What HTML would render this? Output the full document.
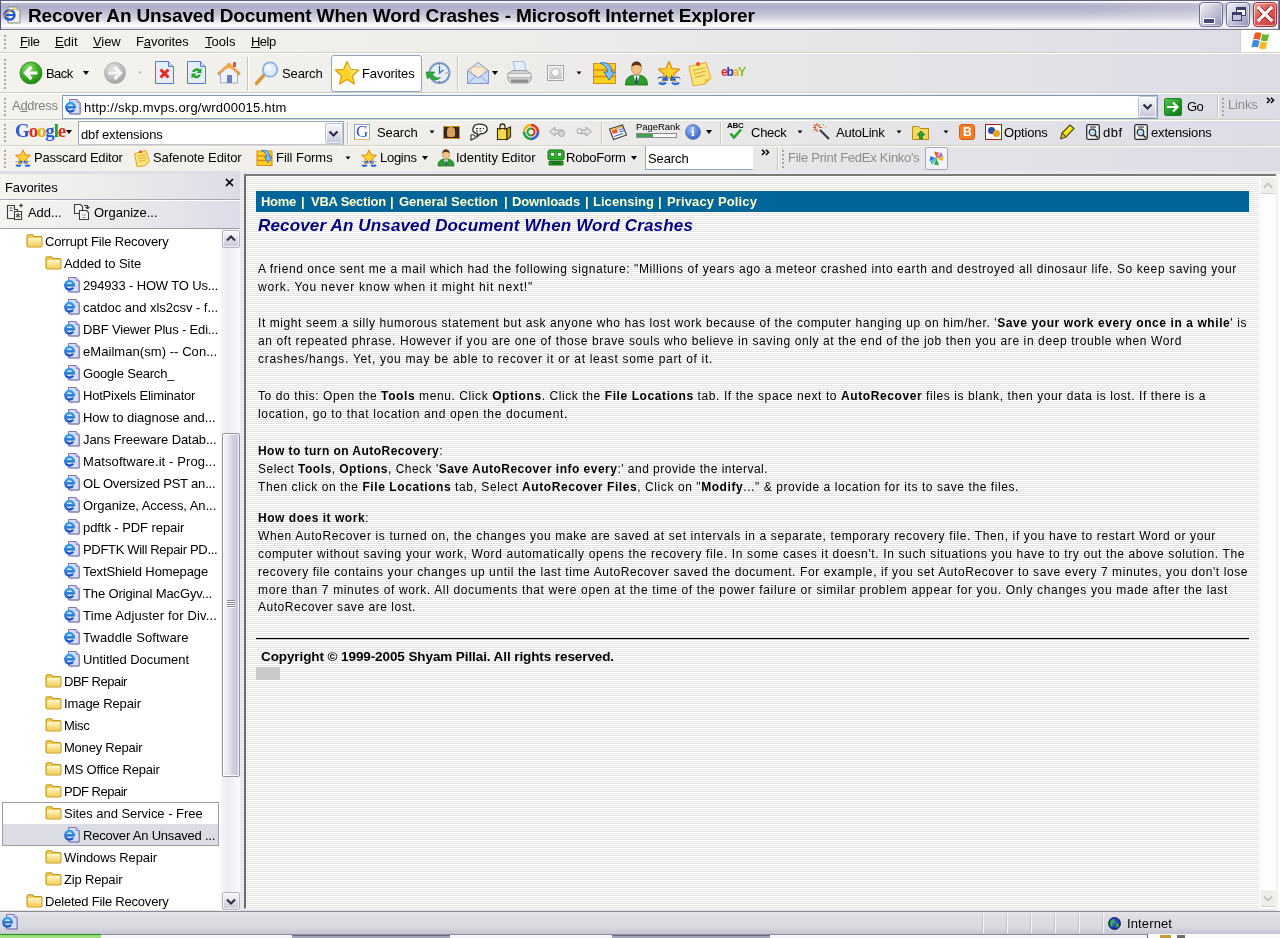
<!DOCTYPE html>
<html>
<head>
<meta charset="utf-8">
<title>Recover An Unsaved Document When Word Crashes</title>
<style>
*{box-sizing:border-box;margin:0;padding:0}
html,body{width:1280px;height:938px;overflow:hidden;will-change:transform;background:#e4e3e8;font-family:"Liberation Sans",sans-serif;font-size:13px;color:#000}
.a{position:absolute;white-space:nowrap}
#titlebar{left:0;top:0;width:1280px;height:30px;background:linear-gradient(#62627e 0,#62627e 1px,#f2f2f8 1px,#f2f2f8 2.500px,#b8b8cc 3.500px,#aeaecb 7px,#c2c2d4 14px,#dedee8 20px,#fbfbfc 25px,#fbfbfc 26.500px,#e6e6ec 27.500px,#e6e6ec 28.500px,#7a7a96 29px,#7a7a96 30px)}
#titletext{left:28px;top:4px;font-weight:bold;font-size:19px;line-height:24px;color:#000;letter-spacing:-0.15px}
#menubar{left:0;top:30px;width:1280px;height:23px;background:linear-gradient(to right,#f3f2ed 0,#efeeea 35%,#dcdce6 100%);border-bottom:1px solid #d2d0c6}
.grip{width:2px;background-image:linear-gradient(#aaa89c 0,#aaa89c 2px,transparent 2px);background-size:2px 4px}
.menu{top:34px;font-size:13px;line-height:16px}
.menu u{text-decoration:underline}
#toolbar{left:0;top:53px;width:1280px;height:40px;background:linear-gradient(to right,#f3f2ed 0,#efeeea 35%,#dcdce6 100%);border-top:1px solid #fff;border-bottom:1px solid #cfcdc2}
#addrbar{left:0;top:93px;width:1280px;height:26px;background:linear-gradient(to right,#f3f2ed 0,#efeeea 35%,#dcdce6 100%);border-top:1px solid #fff}
#googlebar{left:0;top:119px;width:1280px;height:26px;background:linear-gradient(to right,#f3f2ed 0,#efeeea 35%,#dcdce6 100%);border-top:1px solid #d4d2c6;box-shadow:inset 0 1px 0 #fbfbf8}
#robobar{left:0;top:145px;width:1280px;height:27px;background:linear-gradient(to right,#f3f2ed 0,#efeeea 35%,#dcdce6 100%);border-top:1px solid #d4d2c6;box-shadow:inset 0 1px 0 #fbfbf8}
#favpane{left:0;top:172px;width:240px;height:738px;background:#fff}
#favhead{left:0;top:171px;width:240px;height:29px;background:linear-gradient(#dedee6 0,#dedee6 3px,rgba(255,255,255,0) 3px),linear-gradient(to right,#f4f4f0 0,#ececec 45%,#dcdce8 100%);border-bottom:1px solid #a8a8b0}
#favtools{left:0;top:200px;width:240px;height:29px;background:linear-gradient(to right,#f4f4f0 0,#ececec 45%,#dcdce8 100%);border-top:1px solid #fbfbfb;border-bottom:1px solid #9c9ca4}
#splitter{left:240px;top:171px;width:1040px;height:739px;background:#e8e8ee}
#content{left:244px;top:174px;width:1032px;height:735px;border-bottom:1px solid #fbfbf6;border-left:2px solid #6e6e6a;border-top:2px solid #6e6e6a;border-top-color:#7a7a76;background:repeating-linear-gradient(#ffffff 0,#ffffff 1px,#e4e4e2 1px,#e4e4e2 2px)}
#statusbar{left:0;top:911px;width:1280px;height:23px;border-top:1px solid #8c8c94;background:linear-gradient(#e6e6ec 0,#dedee4 4px,#d8d8e0 15px,#c6c6d0 22px)}
#taskbar{left:0;top:934px;width:1280px;height:4px;background:#f3f3f7}
.tb{top:2px;width:24px;height:25px;border-radius:4px;border:1px solid #6c6c94;background:linear-gradient(135deg,#f4f4fa 0,#d4d4e2 35%,#a8a8c6 80%,#8c8cb0 100%);box-shadow:inset 0 0 0 1px rgba(255,255,255,.55)}
.tb i{position:absolute;display:block;border:1px solid #3c3c66;background:#fff}
.tc{background:linear-gradient(135deg,#f4a49c 0,#e06058 40%,#c83c3c 100%);border-color:#a03434}
.tc svg{position:absolute;left:-1px;top:-1px}
.dn{width:0;height:0;border-left:3.5px solid transparent;border-right:3.5px solid transparent;border-top:4px solid #000}
.vsep{width:2px;border-left:1px solid #c8c6ba;border-right:1px solid #fff}
.cbtn{border:1px solid #b8c4dc;border-radius:2px;background:linear-gradient(#f8f8fc,#dcdce8 60%,#c4c4d8);box-shadow:inset 0 0 0 1px rgba(255,255,255,.7)}
.ft{line-height:16px;font-size:13px}
.sbtn{width:18px;height:18px;border:1px solid #b4b4c4;border-radius:2px;background:linear-gradient(#fbfbfd,#e0e0ea 50%,#c8c8d8);box-shadow:inset 0 0 0 1px rgba(255,255,255,.7)}
.pl{font-size:12px;line-height:18px;color:#000}
</style>
</head>
<body>
<div class="a" id="titlebar"></div>
<div class="a" style="left:0;top:0;width:1px;height:30px;background:#54547a"></div><div class="a" style="left:1278px;top:0;width:2px;height:30px;background:linear-gradient(to right,#8c8cac,#4c4c70)"></div><div class="a" style="left:1080px;top:1px;width:198px;height:27px;background:linear-gradient(to right,rgba(255,255,255,0),rgba(255,255,255,.3))"></div><div class="a" id="titletext">Recover An Unsaved Document When Word Crashes - Microsoft Internet Explorer</div>
<div class="a" id="menubar"></div>
<div class="a" id="toolbar"></div>
<div class="a" id="addrbar"></div>
<div class="a" id="googlebar"></div>
<div class="a" id="robobar"></div>
<div class="a" id="favpane"></div>
<div class="a" id="favhead"></div>
<div class="a" id="favtools"></div>
<div class="a" id="splitter"></div>
<div class="a" id="content"></div>
<div class="a" id="statusbar"></div>
<div class="a" id="taskbar"></div>
<!--MENU-->
<svg class="a" style="left:3px;top:6px" width="20" height="18" viewBox="0 0 20 18">
<path d="M5 1h9l3 3v13H5z" fill="#f4f2e6" stroke="#8a8a80" stroke-width="1"/>
<path d="M14 1v3h3" fill="#d8d6c8" stroke="#8a8a80" stroke-width="0.8"/>
<ellipse cx="6.5" cy="9" rx="5" ry="4.6" fill="none" stroke="#1c58d8" stroke-width="2.4"/>
<path d="M2 9h9" stroke="#1c58d8" stroke-width="2"/>
<path d="M0.5 11.5C3 5 9 2.5 12.5 3.5" fill="none" stroke="#e8a020" stroke-width="1.2"/>
</svg>
<div class="a tb" style="left:1199px"><i style="left:4px;top:16px;width:10px;height:4px;background:#4a4a78;border:0;outline:1px solid #fff"></i></div>
<div class="a tb" style="left:1226px"><i style="left:9px;top:4px;width:10px;height:9px;border-top-width:3px"></i><i style="left:5px;top:9px;width:10px;height:9px;border-top-width:3px;background:#c4c4da"></i></div>
<div class="a tb tc" style="left:1253px"><svg width="24" height="24" viewBox="0 0 24 24"><path d="M6 6l12 12M18 6L6 18" stroke="#7a1c1c" stroke-width="4.6"/><path d="M6 6l12 12M18 6L6 18" stroke="#fff" stroke-width="3.2" stroke-linecap="square"/></svg></div>
<div class="a grip" style="left:4px;top:35px;height:16px"></div>
<div class="a menu" style="left:20px;letter-spacing:-0.342px"><u>F</u>ile</div>
<div class="a menu" style="left:55px;letter-spacing:0.048px"><u>E</u>dit</div>
<div class="a menu" style="left:93px;letter-spacing:-0.088px"><u>V</u>iew</div>
<div class="a menu" style="left:136px;letter-spacing:-0.098px">F<u>a</u>vorites</div>
<div class="a menu" style="left:205px;letter-spacing:0.048px"><u>T</u>ools</div>
<div class="a menu" style="left:251px;letter-spacing:-0.537px"><u>H</u>elp</div>
<div class="a" style="left:1240px;top:30px;width:40px;height:22px;background:#fff;border-left:1px solid #d6d4c8"></div>
<svg class="a" style="left:1251px;top:31px" width="22" height="20" viewBox="0 0 20 18">
<path d="M3.5 1.5C5.5 0.5 7.5 1 9.5 2L8 8C6 7 4 6.8 2 7.6z" fill="#ee5a24"/>
<path d="M10.5 2.4C12.5 3.4 14.5 3.6 16.5 2.6L15 8.8C13 9.6 11 9.2 9 8.4z" fill="#6ab52c"/>
<path d="M1.8 8.6C3.8 7.8 5.8 8 7.8 9L6.3 15C4.3 14 2.3 14 0.3 14.8z" fill="#3a8ae0"/>
<path d="M8.8 9.4C10.8 10.2 12.8 10.6 14.8 9.8L13.3 16C11.3 16.8 9.3 16.4 7.3 15.4z" fill="#f4b81c"/>
</svg>
<!--TOOLBAR-->
<div class="a grip" style="left:4px;top:59px;height:32px"></div>
<svg class="a" style="left:19px;top:61px" width="24" height="24" viewBox="0 0 24 24">
<defs><radialGradient id="gb" cx="40%" cy="30%" r="75%"><stop offset="0" stop-color="#8fe070"/><stop offset="0.55" stop-color="#3cb024"/><stop offset="1" stop-color="#1c7c14"/></radialGradient>
<radialGradient id="gf" cx="40%" cy="30%" r="75%"><stop offset="0" stop-color="#e4e4e4"/><stop offset="0.6" stop-color="#bdbdbd"/><stop offset="1" stop-color="#9a9a9a"/></radialGradient></defs>
<circle cx="12" cy="12" r="11" fill="url(#gb)" stroke="#2a8a1c" stroke-width="0.8"/>
<path d="M18.500 12H7.500M12.500 6L6.500 12l6 6" fill="none" stroke="#fff" stroke-width="3.200"/></svg>
<div class="a" style="left:46px;top:66px;line-height:16px;letter-spacing:-0.577px">Back</div>
<div class="a dn" style="left:83px;top:71px"></div>
<svg class="a" style="left:103px;top:61px" width="24" height="24" viewBox="0 0 24 24"><circle cx="12" cy="12" r="10.5" fill="url(#gf)" stroke="#a8a8a8" stroke-width="0.8"/><path d="M5.500 12h11M11.500 6l6 6-6 6" fill="none" stroke="#f6f6f6" stroke-width="3.200"/></svg>
<div class="a dn" style="left:137px;top:71px;border-top-color:#c4c4c4;transform:scale(.7)"></div>
<svg class="a" style="left:154px;top:60px" width="22" height="26" viewBox="0 0 22 26"><path d="M1.5 1.5h13l5 5v17h-18z" fill="#e6eefc" stroke="#5a7ac8"/><path d="M14.5 1.5v5h5" fill="#c8d8f4" stroke="#5a7ac8"/><path d="M6.5 9.5l8 8M14.5 9.5l-8 8" stroke="#e8281c" stroke-width="3"/></svg>
<svg class="a" style="left:186px;top:60px" width="22" height="26" viewBox="0 0 22 26"><path d="M1.5 1.5h13l5 5v17h-18z" fill="#e6eefc" stroke="#5a7ac8"/><path d="M14.5 1.5v5h5" fill="#c8d8f4" stroke="#5a7ac8"/><path d="M6 12a5 5 0 0 1 8-2.5l1.5-1.5v5h-5l1.8-1.8A3 3 0 0 0 8.5 12z" fill="#24a428"/><path d="M15 14.500a5 5 0 0 1-8 2.500L5.500 18.500v-5h5L8.700 15.300A3 3 0 0 0 12.500 14.500z" fill="#24a428"/></svg>
<svg class="a" style="left:216px;top:60px" width="26" height="26" viewBox="0 0 26 26"><path d="M13 3L1.500 13.500l2.500 2L13 7l9 8.500 2.500-2z" fill="#f09c38" stroke="#d07818" stroke-width="0.6"/><path d="M4.500 13.500L13 6l8.500 7.500V23h-17z" fill="#eef2fa" stroke="#8ca0cc" stroke-width="0.8"/><path d="M13 3L2 13l11-5 11 5z" fill="#f4a848"/><rect x="11" y="15" width="5" height="8" fill="#6a82c4"/><rect x="17" y="2" width="3" height="5" fill="#d8584c"/></svg>
<div class="a vsep" style="left:247px;top:57px;height:34px"></div>
<svg class="a" style="left:254px;top:60px" width="26" height="26" viewBox="0 0 26 26"><path d="M2.500 23.500l8-9" stroke="#d89838" stroke-width="3.400" stroke-linecap="round"/><circle cx="16" cy="9.500" r="7.200" fill="#dcecfc" stroke="#8cb0e0" stroke-width="1.800"/><circle cx="14.500" cy="8" r="3" fill="#fff" opacity=".8"/></svg>
<div class="a" style="left:282px;top:66px;line-height:16px;letter-spacing:-0.101px">Search</div>
<div class="a" style="left:331px;top:55px;width:91px;height:37px;background:#fff;border:1px solid #98a6c4;border-radius:3px"></div>
<svg class="a" style="left:334px;top:60px" width="26" height="26" viewBox="0 0 26 26"><path d="M13 1.500l3.400 7.800 8.400.8-6.300 5.600 1.900 8.300L13 19.600 5.600 24l1.900-8.300L1.200 10.100l8.400-.8z" fill="#fcd428" stroke="#d89c10" stroke-width="1.200" stroke-linejoin="round"/><path d="M13 4.500l2.400 5.800 5.600.6-4.300 3.800" fill="none" stroke="#fff09c" stroke-width="1.200"/></svg>
<div class="a" style="left:362px;top:66px;line-height:16px;letter-spacing:-0.097px">Favorites</div>
<svg class="a" style="left:425px;top:60px" width="27" height="26" viewBox="0 0 27 26"><circle cx="14.500" cy="13" r="10" fill="#e4eefa" stroke="#7c98c4" stroke-width="2"/><path d="M14.500 6v7l4-3" fill="none" stroke="#3c68b4" stroke-width="1.300"/><path d="M1 12h9l-2.500 2.500c2 3 5 4 8 3-3 3.500-8.500 3-11-.5L2.500 19z" fill="#2ca83c" stroke="#148424" stroke-width="0.600"/><path d="M14.500 3v2M22.500 13h-2M14.500 23v-2" stroke="#c85c3c" stroke-width="1.200"/></svg>
<div class="a vsep" style="left:457px;top:57px;height:34px"></div>
<svg class="a" style="left:466px;top:61px" width="24" height="24" viewBox="0 0 24 24"><path d="M1.500 9.500L12 1.500l10.500 8v13h-21z" fill="#dce8fa" stroke="#8098d0"/><path d="M5 6h14v9l-7 4-7-4z" fill="#fbead0" stroke="#d8a868" stroke-width="0.700"/><path d="M1.500 9.500L12 17l10.500-7.500v13h-21z" fill="#c8dcf8" stroke="#8098d0"/><path d="M1.500 22.500L10 15M22.500 22.500L14 15" stroke="#8098d0" stroke-width="0.800"/></svg>
<div class="a dn" style="left:492px;top:71px"></div>
<svg class="a" style="left:506px;top:60px" width="27" height="26" viewBox="0 0 27 26"><path d="M7 1.500h11l2.500 11H9.500z" fill="#e4eefc" stroke="#98b0d8" stroke-width="0.800"/><path d="M2 13.500l5-3h13l5 3v6.500l-3 3H5l-3-3z" fill="#d4d4d4" stroke="#8c8c8c" stroke-width="0.800"/><path d="M2 13.500h23v4H2z" fill="#ececec" stroke="#9c9c9c" stroke-width="0.600"/><path d="M5 19.500h17v3H5z" fill="#8c8c8c"/></svg>
<div class="a" style="left:547px;top:65px;width:17px;height:16px;background:linear-gradient(#e8e8e8,#c4c4c4);border:1px solid #a4a4a4;box-shadow:inset 0 0 0 1px #f6f6f6"></div>
<div class="a" style="left:551px;top:68px;width:9px;height:9px;border-radius:5px;background:#fbfbfb;border:1px solid #b4b4b4"></div>
<div class="a dn" style="left:576px;top:71px;transform:scale(.8)"></div>
<svg class="a" style="left:592px;top:61px" width="26" height="24" viewBox="0 0 26 24"><rect x="1.500" y="2.500" width="22" height="20" fill="#fcd020" stroke="#d88c10"/><path d="M1.500 9h22M1.500 15.500h22" stroke="#e08418" stroke-width="1.600"/><path d="M8 2c7-1.500 12 2 11.500 9h3.500l-6 8-5-8h3.500c0-4-3-6.500-7.500-9z" fill="#7cc0f4" stroke="#2c6cb8" stroke-width="0.900"/></svg>
<svg class="a" style="left:624px;top:60px" width="25" height="26" viewBox="0 0 25 26"><path d="M1.500 25c0-7 3.500-10 11-10s11 3 11 10z" fill="#2c9c2c" stroke="#146c14" stroke-width="0.800"/><path d="M9.500 15.500l3 9.500 3-9.500z" fill="#fff"/><path d="M12 16.500l1 0 .8 6-1.300 2-1.300-2z" fill="#1c2c6c"/><ellipse cx="12.500" cy="8.500" rx="5" ry="6" fill="#f4c088" stroke="#b87838" stroke-width="0.600"/><path d="M7.500 7c0-4 2.500-5.500 5-5.500s5 1.500 5 5.500c-2-2.500-7-3-10 0z" fill="#5c3414"/></svg>
<svg class="a" style="left:656px;top:60px" width="26" height="26" viewBox="0 0 26 26"><path d="M13 1.500l3 7 7.500.7-5.600 5 1.700 7.400L13 17.700l-6.600 3.900 1.700-7.400-5.600-5L10 8.500z" fill="#fcd030" stroke="#e08c18" stroke-width="1.200" stroke-linejoin="round"/><path d="M1.500 18.500c2-2 5-2 6.500 0l-1.500 1.200 5 .8-1-5-1.200 1.500M24.500 18.500c-2-2-5-2-6.500 0l1.500 1.200-5 .8 1-5 1.200 1.500" fill="#2c6ce0" stroke="#1c4cb0" stroke-width="0.800"/><path d="M3 22.500c2 2 5 2 7 0M23 22.500c-2 2-5 2-7 0" stroke="#2c6ce0" stroke-width="2.400" fill="none"/></svg>
<svg class="a" style="left:687px;top:60px" width="26" height="26" viewBox="0 0 26 26"><path d="M2 6.500L19 2.500l5 16-6 5.500-12 2z" fill="#fce478" stroke="#d8a420" stroke-width="0.900"/><path d="M24 18.500l-6.500.8.500 4.700z" fill="#e8bc38"/><path d="M6 10.500l12-3M7 14l12-3M8 17.500l10-2.500" stroke="#d8a838" stroke-width="1"/><circle cx="11" cy="4" r="2" fill="#e84c2c"/></svg>
<div class="a" style="left:721px;top:63px;font-weight:bold;font-size:12px;letter-spacing:-1.3px;line-height:18px"><span style="color:#e4242c">e</span><span style="color:#2438c4">b</span><span style="color:#f4b41c">a</span><span style="color:#8cc42c;font-size:13px">Y</span></div>
<!--ADDR-->
<div class="a grip" style="left:4px;top:98px;height:18px"></div>
<div class="a" style="left:12px;top:98px;color:#808080;line-height:16px;letter-spacing:-0.300px">A<u>d</u>dress</div>
<div class="a" style="left:62px;top:95px;width:1096px;height:24px;background:#fff;border:1px solid #7f9db9"></div>
<svg class="a" style="left:64px;top:98px" width="17" height="17" viewBox="0 0 17 17"><path d="M5.500 1.500h7.500l3 3v11.500h-10.500z" fill="#d8dcf8" stroke="#7878b8" stroke-width="1"/><path d="M13 1.500v3h3" fill="#b8c0ec" stroke="#7878b8" stroke-width="0.800"/><path d="M16.500 5v11h-10" fill="none" stroke="#8c8cb4" stroke-width="1"/><path d="M2.300 9.200H10.800A4.300 4.300 0 1 0 10.100 11.600" fill="#e4f0fc" fill-opacity=".7" stroke="url(#eg)" stroke-width="2.400"/></svg>
<div class="a" style="left:84px;top:100px;line-height:16px;letter-spacing:0.212px">http://skp.mvps.org/wrd00015.htm</div>
<div class="a cbtn" style="left:1138px;top:96px;width:19px;height:22px"></div>
<svg class="a" style="left:1142px;top:103px" width="11" height="8" viewBox="0 0 11 8"><path d="M1.500 1.500l4 4 4-4" fill="none" stroke="#2c2c4c" stroke-width="2.200"/></svg>
<div class="a" style="left:1164px;top:98px;width:18px;height:18px;border-radius:2px;background:linear-gradient(135deg,#5cc454,#1c9424 60%,#14781c);border:1px solid #1c8420"></div>
<svg class="a" style="left:1164px;top:98px" width="18" height="18" viewBox="0 0 18 18"><path d="M3 9h10M9 4.500l4.500 4.500L9 13.500" fill="none" stroke="#fff" stroke-width="2.200"/></svg>
<div class="a" style="left:1187px;top:99px;line-height:16px;letter-spacing:-0.5px">Go</div>
<div class="a vsep" style="left:1217px;top:95px;height:23px"></div>
<div class="a grip" style="left:1222px;top:98px;height:18px"></div>
<div class="a" style="left:1228px;top:97px;color:#8c8c8c;line-height:16px;letter-spacing:-0.152px">Links</div>
<svg class="a" style="left:1266px;top:97px" width="9" height="7" viewBox="0 0 10 8"><path d="M1 0.800l3 3-3 3M5.500 0.800l3 3-3 3" fill="none" stroke="#000" stroke-width="1.700"/></svg>
<!--GOOGLE-->
<div class="a grip" style="left:4px;top:124px;height:18px"></div>
<div class="a" style="left:15px;top:120px;font-family:'Liberation Serif',serif;font-weight:bold;font-size:19px;line-height:22px;letter-spacing:-1.150px"><span style="color:#2c5cdc">G</span><span style="color:#dc2c24">o</span><span style="color:#e8ac14">o</span><span style="color:#2c5cdc">g</span><span style="color:#24a42c">l</span><span style="color:#dc2c24">e</span></div>
<div class="a dn" style="left:66px;top:130px"></div>
<div class="a" style="left:78px;top:121px;width:266px;height:24px;background:#fff;border:1px solid #98a8c8;border-bottom-color:#c4c8d4"></div>
<div class="a" style="left:81px;top:127px;line-height:16px;letter-spacing:-0.160px">dbf extensions</div>
<div class="a cbtn" style="left:325px;top:123px;width:18px;height:21px"></div>
<svg class="a" style="left:328px;top:130px" width="11" height="8" viewBox="0 0 11 8"><path d="M1.500 1.500l4 4 4-4" fill="none" stroke="#2c2c4c" stroke-width="2.200"/></svg>
<div class="a vsep" style="left:347px;top:122px;height:22px"></div>
<div class="a" style="left:354px;top:124px;width:16px;height:16px;background:#fff;border:1px solid #8ca4d4;border-right-color:#8cc08c;border-bottom-color:#e4b85c"></div>
<div class="a" style="left:356px;top:122px;font-family:'Liberation Serif',serif;font-size:17px;line-height:20px;color:#2c54c4">G</div>
<div class="a" style="left:377px;top:125px;line-height:16px;letter-spacing:-0.101px">Search</div>
<div class="a dn" style="left:429px;top:130px;transform:scale(.8)"></div>
<div class="a" style="left:443px;top:126px;width:17px;height:13px;background:#3c2410;border:1px solid #c89420"></div>
<div class="a" style="left:447px;top:127px;width:8px;height:10px;border-radius:4px 4px 2px 2px;background:#d8a05c"></div>
<svg class="a" style="left:469px;top:123px" width="20" height="18" viewBox="0 0 20 18"><path d="M6 2c4-1.500 11-1 12 3s-3 6-7 6l-3 3 .5-3.500C4 10 2 7 6 2z" fill="#fff" stroke="#2c2c2c" stroke-width="1.300"/><path d="M7 5.500h8M7 8h6" stroke="#2c2c2c" stroke-dasharray="2 1.500" stroke-width="1.200"/><path d="M2 12c3-1 5 1 4 3l-4 2z" fill="#fff" stroke="#2c2c2c" stroke-width="1.100"/></svg>
<svg class="a" style="left:496px;top:123px" width="16" height="18" viewBox="0 0 16 18"><path d="M1.500 5.500h9.500v11H1.500z" fill="#f4d84c" stroke="#3c3410" stroke-width="1.200"/><path d="M11 5.500l3.500-1.500v10L11 16.500z" fill="#c8a82c" stroke="#3c3410" stroke-width="1.200"/><path d="M4 7V3.500a2.500 2.500 0 0 1 5 0V7" fill="none" stroke="#3c3410" stroke-width="1.300"/></svg>
<svg class="a" style="left:521px;top:123px" width="20" height="18" viewBox="0 0 20 18"><path d="M10 2a7 7 0 0 1 7 7" fill="none" stroke="#e8341c" stroke-width="2.600"/><path d="M17 9a7 7 0 0 1-7 7" fill="none" stroke="#2c5ce0" stroke-width="2.600"/><path d="M10 16a7 7 0 0 1-7-7" fill="none" stroke="#24a434" stroke-width="2.600"/><path d="M3 9a7 7 0 0 1 7-7" fill="none" stroke="#f4b41c" stroke-width="2.600"/><path d="M10 5.500a3.500 3.500 0 0 1 0 7" fill="none" stroke="#e8341c" stroke-width="2"/><path d="M10 12.500a3.500 3.500 0 0 1 0-7" fill="none" stroke="#24a434" stroke-width="2"/></svg>
<svg class="a" style="left:548px;top:125px" width="19" height="14" viewBox="0 0 19 14"><path d="M1.500 6.500L7 2v3h8v3.500H7V11z" fill="#e0e0e0" stroke="#a4a4a4"/><circle cx="13.500" cy="8.500" r="3" fill="#d4d4d4" stroke="#a4a4a4"/></svg>
<svg class="a" style="left:574px;top:125px" width="19" height="14" viewBox="0 0 19 14"><path d="M17.500 6.500L12 2v3H4v3.500h8V11z" fill="#e0e0e0" stroke="#a4a4a4"/><circle cx="5.500" cy="6" r="2.500" fill="#eee" stroke="#a4a4a4"/></svg>
<div class="a vsep" style="left:601px;top:122px;height:22px"></div>
<svg class="a" style="left:608px;top:123px" width="20" height="18" viewBox="0 0 20 18"><path d="M1.500 6l13-4 4 10-13 4.500z" fill="#fbfbfb" stroke="#3c3c3c" stroke-width="1.100"/><path d="M3.500 7l5-1.500 1.500 4-5 1.500z" fill="#e85c3c"/><path d="M10 5l5-1.500M10.700 7l5-1.500M11.400 9l5-1.500M6 13.500l9-3" stroke="#4c6cc4" stroke-width="1.200"/><path d="M3.500 7l11-3.300" stroke="#f4b428" stroke-width="1.400"/></svg>
<div class="a" style="left:636px;top:121px;font-size:9.5px;line-height:12px;letter-spacing:-0.050px">PageRank</div>
<div class="a" style="left:636px;top:133px;width:41px;height:5px;background:#fff;border:1px solid #8c8c8c"></div>
<div class="a" style="left:637px;top:134px;width:16px;height:3px;background:#3ca44c"></div>
<div class="a" style="left:685px;top:124px;width:16px;height:16px;border-radius:8px;background:radial-gradient(circle at 40% 35%,#a4c4f4,#3c6cd4 70%,#2c4ca4);border:1px solid #6c84b4"></div>
<div class="a" style="left:691px;top:125px;font-family:'Liberation Serif',serif;font-weight:bold;font-size:13px;line-height:14px;color:#fff">i</div>
<div class="a dn" style="left:706px;top:130px"></div>
<div class="a vsep" style="left:720px;top:122px;height:22px"></div>
<div class="a" style="left:727px;top:121px;font-size:8px;font-weight:bold;line-height:9px;letter-spacing:-0.300px">ABC</div>
<svg class="a" style="left:729px;top:128px" width="14" height="12" viewBox="0 0 14 12"><path d="M1.500 5.500l3.500 4L12 1.500" fill="none" stroke="#24a42c" stroke-width="2.600"/></svg>
<div class="a" style="left:751px;top:125px;line-height:16px;letter-spacing:-0.252px">Check</div>
<div class="a dn" style="left:797px;top:130px;transform:scale(.8)"></div>
<svg class="a" style="left:812px;top:122px" width="19" height="19" viewBox="0 0 19 19"><path d="M8 8l9 9" stroke="#3c3c3c" stroke-width="2.200"/><path d="M5 1v3M5 7v3M1 5.500h3M7 5.500h3M2 2.500l2 2M8 2.500l-2 2M2 8.500l2-2" stroke="#e84c2c" stroke-width="1.100"/><path d="M11 2l1 1.500M13 5h1.500" stroke="#f4a41c" stroke-width="1.100"/></svg>
<div class="a" style="left:836px;top:125px;line-height:16px;letter-spacing:-0.249px">AutoLink</div>
<div class="a dn" style="left:896px;top:130px;transform:scale(.8)"></div>
<svg class="a" style="left:911px;top:124px" width="20" height="17" viewBox="0 0 20 17"><path d="M1.500 2.500h6l2 2h8v11h-16z" fill="#f4d85c" stroke="#b88c1c"/><path d="M10 7l4 4h-2.500v4h-3v-4H6z" fill="#2ca43c" stroke="#146c1c" stroke-width="0.700"/></svg>
<div class="a dn" style="left:943px;top:130px;transform:scale(.8)"></div>
<div class="a" style="left:959px;top:124px;width:16px;height:16px;border-radius:3px;background:#f47c24;border:1px solid #d45c14"></div>
<div class="a" style="left:963px;top:125px;font-weight:bold;font-size:12px;line-height:14px;color:#fff">B</div>
<div class="a" style="left:985px;top:124px;width:17px;height:16px;background:#fff;border:1px solid #a41c1c"></div>
<div class="a" style="left:988px;top:127px;width:7px;height:7px;border-radius:4px;background:#2c4ca4"></div>
<div class="a" style="left:993px;top:130px;width:7px;height:7px;border-radius:4px;background:#e8a41c"></div>
<div class="a" style="left:1004px;top:125px;line-height:16px;letter-spacing:-0.173px">Options</div>
<svg class="a" style="left:1058px;top:123px" width="19" height="18" viewBox="0 0 19 18"><path d="M4 10l8-8 4 3.500-8 8.500z" fill="#f4e41c" stroke="#4c4410" stroke-width="1.100"/><path d="M4 10l4 4-5.500 2z" fill="#c8c410" stroke="#4c4410" stroke-width="1"/></svg>
<svg class="a" style="left:1086px;top:124px" width="14" height="16" viewBox="0 0 14 16"><rect x="0.700" y="0.700" width="12.600" height="14.600" rx="1.500" fill="#f4f4f4" stroke="#2c2c2c" stroke-width="1.300"/><path d="M4 3h6" stroke="#444" stroke-width="1.200"/><circle cx="6.500" cy="8.500" r="3.300" fill="#bce0fc" stroke="#2c2c2c" stroke-width="1.200"/><path d="M9 11l3 3" stroke="#2c2c2c" stroke-width="1.600"/></svg>
<div class="a" style="left:1103px;top:125px;line-height:16px;letter-spacing:0.507px">dbf</div>
<svg class="a" style="left:1134px;top:124px" width="14" height="16" viewBox="0 0 14 16"><rect x="0.700" y="0.700" width="12.600" height="14.600" rx="1.500" fill="#f4f4f4" stroke="#2c2c2c" stroke-width="1.300"/><path d="M4 3h6" stroke="#444" stroke-width="1.200"/><circle cx="6.500" cy="8.500" r="3.300" fill="#bce0fc" stroke="#2c2c2c" stroke-width="1.200"/><path d="M9 11l3 3" stroke="#2c2c2c" stroke-width="1.600"/></svg>
<div class="a" style="left:1151px;top:125px;line-height:16px;letter-spacing:-0.156px">extensions</div>
<!--ROBO-->
<div class="a grip" style="left:4px;top:150px;height:18px"></div>
<svg class="a" style="left:14px;top:149px" width="18" height="18" viewBox="0 0 18 18"><path d="M9 0.800l2.200 5 5.300.5-4 3.600 1.200 5.300L9 12.400l-4.700 2.800 1.200-5.300-4-3.600 5.300-.5z" fill="#fcd030" stroke="#e08818" stroke-width="1"/><path d="M1 13c1.500-1.500 3.500-1.500 5 0l-1 1 3.500.5-.7-3.500-1 1M17 13c-1.500-1.500-3.500-1.500-5 0l1 1-3.500.5.700-3.500 1 1" fill="#2c6ce0"/><path d="M2 16c1.500 1.200 3.500 1.200 5 0M16 16c-1.500 1.200-3.500 1.200-5 0" stroke="#2c6ce0" stroke-width="1.800" fill="none"/></svg>
<div class="a" style="left:34px;top:150px;line-height:16px;letter-spacing:-0.211px">Passcard Editor</div>
<svg class="a" style="left:133px;top:149px" width="18" height="18" viewBox="0 0 18 18"><path d="M1.500 4.500L13 1.500l3.500 11-4 4-8.500 1.300z" fill="#fce478" stroke="#d8a420" stroke-width="0.900"/><path d="M4.500 7.500l8-2M5.200 10l8-2M6 12.500l7-1.700" stroke="#d8a838" stroke-width="0.900"/><circle cx="7.500" cy="2.800" r="1.500" fill="#e84c2c"/></svg>
<div class="a" style="left:153px;top:150px;line-height:16px;letter-spacing:-0.068px">Safenote Editor</div>
<svg class="a" style="left:256px;top:149px" width="18" height="18" viewBox="0 0 18 18"><rect x="1" y="2" width="15" height="14.500" fill="#fcd020" stroke="#d88c10"/><path d="M1 6.800h15M1 11.500h15" stroke="#e08418" stroke-width="1.300"/><path d="M5.500 1.500c5-1 8.500 1.500 8 6.500h2.500l-4 5.500-3.500-5.500H11c0-3-2-4.700-5.500-6.500z" fill="#7cc0f4" stroke="#2c6cb8" stroke-width="0.800"/></svg>
<div class="a" style="left:276px;top:150px;line-height:16px;letter-spacing:-0.045px">Fill Forms</div>
<div class="a dn" style="left:345px;top:156px;transform:scale(.8)"></div>
<svg class="a" style="left:360px;top:149px" width="18" height="18" viewBox="0 0 18 18"><path d="M9 0.800l2.200 5 5.300.5-4 3.600 1.200 5.300L9 12.400l-4.700 2.800 1.200-5.300-4-3.600 5.300-.5z" fill="#fcd030" stroke="#e08818" stroke-width="1"/><path d="M1 13c1.500-1.500 3.500-1.500 5 0l-1 1 3.500.5-.7-3.500-1 1M17 13c-1.500-1.500-3.500-1.500-5 0l1 1-3.500.5.700-3.500 1 1" fill="#2c6ce0"/><path d="M2 16c1.500 1.200 3.500 1.200 5 0M16 16c-1.500 1.200-3.500 1.200-5 0" stroke="#2c6ce0" stroke-width="1.800" fill="none"/></svg>
<div class="a" style="left:380px;top:150px;line-height:16px;letter-spacing:-0.285px">Logins</div>
<div class="a dn" style="left:422px;top:156px"></div>
<svg class="a" style="left:437px;top:148px" width="18" height="19" viewBox="0 0 18 19"><path d="M1 18c0-5 2.500-7 8-7s8 2 8 7z" fill="#2c9c2c" stroke="#146c14" stroke-width="0.700"/><path d="M7 11.500l2 6 2-6z" fill="#fff"/><path d="M8.700 12.500h.8l.5 3.500-.9 1.500-.9-1.500z" fill="#1c2c6c"/><ellipse cx="9" cy="6.500" rx="3.600" ry="4.300" fill="#f4c088" stroke="#b87838" stroke-width="0.500"/><path d="M5.300 5.500c0-3 2-4.200 3.700-4.200s3.700 1.200 3.700 4.200c-1.500-1.800-5.200-2.200-7.400 0z" fill="#5c3414"/></svg>
<div class="a" style="left:456px;top:150px;line-height:16px;letter-spacing:0.007px">Identity Editor</div>
<svg class="a" style="left:547px;top:149px" width="18" height="17" viewBox="0 0 18 17"><rect x="1" y="1" width="16" height="10" rx="2" fill="#2cb02c" stroke="#146c14"/><rect x="3.500" y="3.500" width="4" height="3.500" fill="#fff" stroke="#146c14" stroke-width="0.600"/><rect x="10.500" y="3.500" width="4" height="3.500" fill="#fff" stroke="#146c14" stroke-width="0.600"/><path d="M2 12.500h14v3.500H2z" fill="#2cb02c" stroke="#146c14"/><path d="M4 14.200h10" stroke="#0c4c0c" stroke-width="1.200"/></svg>
<div class="a" style="left:566px;top:150px;line-height:16px;letter-spacing:-0.228px">RoboForm</div>
<div class="a dn" style="left:631px;top:156px"></div>
<div class="a" style="left:645px;top:146px;width:108px;height:24px;background:#fff;border-left:1px solid #90a8cc;border-bottom:1px solid #90a8cc"></div>
<div class="a" style="left:648px;top:151px;line-height:16px;letter-spacing:-0.101px">Search</div>
<svg class="a" style="left:761px;top:149px" width="9" height="7" viewBox="0 0 10 8"><path d="M1 0.800l3 3-3 3M5.500 0.800l3 3-3 3" fill="none" stroke="#000" stroke-width="1.700"/></svg>
<div class="a vsep" style="left:777px;top:147px;height:23px"></div>
<div class="a grip" style="left:782px;top:150px;height:18px"></div>
<div class="a" style="left:788px;top:150px;line-height:16px;color:#8c8c8c;letter-spacing:-0.250px">File Print FedEx Kinko's</div>
<div class="a" style="left:925px;top:147px;width:23px;height:23px;background:#f4f4f8;border:1px solid #a8a8b8;border-radius:2px"></div>
<svg class="a" style="left:928px;top:150px" width="17" height="17" viewBox="0 0 17 17"><path d="M8.500 8.500L6 1.500l5 1z" fill="#e85c2c"/><path d="M8.500 8.500l7-2.500-1 5z" fill="#f4b41c"/><path d="M8.500 8.500l2.500 7-5-1z" fill="#2ca44c"/><path d="M8.500 8.500l-7 2.500 1-5z" fill="#2c7ce0"/><path d="M8.500 8.500L13 2l2 4z" fill="#8c4cc4" opacity=".8"/><path d="M8.500 8.500L4 15l-2-4z" fill="#24b4c4" opacity=".8"/></svg>
<!--FAV-->
<svg class="a" width="0" height="0"><defs><linearGradient id="fg" x1="0" y1="0" x2="0" y2="1"><stop offset="0" stop-color="#fdf8c8"/><stop offset="1" stop-color="#f2cc58"/></linearGradient><linearGradient id="eg" x1="0" y1="0" x2="0" y2="1"><stop offset="0" stop-color="#38a4e8"/><stop offset="1" stop-color="#1c54c4"/></linearGradient></defs></svg>
<div class="a" style="left:5px;top:180px;line-height:16px;letter-spacing:-0.097px">Favorites</div>
<svg class="a" style="left:225px;top:178px" width="9" height="9" viewBox="0 0 9 9"><path d="M1 1l7 7M8 1L1 8" stroke="#000" stroke-width="1.700"/></svg>
<svg class="a" style="left:6px;top:203px" width="18" height="18" viewBox="0 0 18 18"><path d="M1.500 2.500h7v4h3v9h-10z" fill="#f4f4f4" stroke="#3c3c3c" stroke-width="1.100"/><path d="M3.500 5h3M3.500 7.500h3" stroke="#555" stroke-width="1"/><path d="M8.500 8.500h7v8h-7z" fill="#fbfbfb" stroke="#3c3c3c" stroke-width="1.100"/><path d="M12 10v5M9.800 11.200l4.400 2.600M14.200 11.200l-4.400 2.600" stroke="#3c3c3c" stroke-width="1"/><path d="M13 2.500h4M15 .500v4" stroke="#3c3c3c" stroke-width="1.200"/></svg>
<div class="a" style="left:28px;top:205px;line-height:16px;letter-spacing:-0.061px">Add...</div>
<svg class="a" style="left:73px;top:203px" width="18" height="18" viewBox="0 0 18 18"><path d="M1.500 1.500h6l2 2v7h-8z" fill="#f4f4f4" stroke="#3c3c3c" stroke-width="1.100"/><path d="M6.500 7.500h7l2 2v7h-9z" fill="#fbfbfb" stroke="#3c3c3c" stroke-width="1.100"/><path d="M9 12h4M9 14.500h4" stroke="#999" stroke-width="1"/><path d="M11 2.500h3.500v3M12.500 4l2 1.500 2-1.500" fill="none" stroke="#3c3c3c" stroke-width="1.200"/></svg>
<div class="a" style="left:94px;top:205px;line-height:16px;letter-spacing:0.001px">Organize...</div>
<div class="a" style="left:2px;top:802px;width:217px;height:44px;border:1px solid #9c9ca8;background:#fff"></div>
<div class="a" style="left:3px;top:824px;width:215px;height:21px;background:#dcdce4"></div>
<svg class="a" style="left:26px;top:233px" width="17" height="15" viewBox="0 0 17 15"><path d="M1 3.500c0-1 .6-1.700 1.600-1.700h3.800l1.600 1.700h6.500c.8 0 1.500.6 1.500 1.500v7.500c0 .8-.7 1.500-1.500 1.500h-12c-.8 0-1.500-.7-1.500-1.500z" fill="#f0cc58" stroke="#c49820" stroke-width="1.100"/><path d="M2 6.200c0-.8.500-1.300 1.300-1.300h10.800c.8 0 1.300.5 1.300 1.300v6.100c0 .6-.5 1.100-1.100 1.100H3.100c-.6 0-1.100-.5-1.100-1.100z" fill="url(#fg)"/></svg>
<div class="a ft" style="left:45px;top:234px;letter-spacing:-0.135px">Corrupt File Recovery</div>
<svg class="a" style="left:45px;top:255px" width="17" height="15" viewBox="0 0 17 15"><path d="M1 3.500c0-1 .6-1.700 1.600-1.700h3.800l1.600 1.700h6.500c.8 0 1.500.6 1.500 1.500v7.500c0 .8-.7 1.500-1.500 1.500h-12c-.8 0-1.500-.7-1.500-1.500z" fill="#f0cc58" stroke="#c49820" stroke-width="1.100"/><path d="M2 6.200c0-.8.500-1.300 1.300-1.300h10.800c.8 0 1.300.5 1.300 1.300v6.100c0 .6-.5 1.100-1.100 1.100H3.100c-.6 0-1.100-.5-1.100-1.100z" fill="url(#fg)"/></svg>
<div class="a ft" style="left:64px;top:256px;letter-spacing:-0.074px">Added to Site</div>
<svg class="a" style="left:63px;top:276px" width="17" height="17" viewBox="0 0 17 17"><path d="M5.500 1.500h7.500l3 3v11.500h-10.500z" fill="#d8dcf8" stroke="#7878b8" stroke-width="1"/><path d="M13 1.500v3h3" fill="#b8c0ec" stroke="#7878b8" stroke-width="0.800"/><path d="M16.500 5v11h-10" fill="none" stroke="#8c8cb4" stroke-width="1"/><path d="M2.300 9.200H10.800A4.300 4.300 0 1 0 10.100 11.600" fill="#e4f0fc" fill-opacity=".7" stroke="url(#eg)" stroke-width="2.400"/></svg>
<div class="a ft" style="left:83px;top:278px;letter-spacing:-0.144px">294933 - HOW TO Us...</div>
<svg class="a" style="left:63px;top:298px" width="17" height="17" viewBox="0 0 17 17"><path d="M5.500 1.500h7.500l3 3v11.500h-10.500z" fill="#d8dcf8" stroke="#7878b8" stroke-width="1"/><path d="M13 1.500v3h3" fill="#b8c0ec" stroke="#7878b8" stroke-width="0.800"/><path d="M16.500 5v11h-10" fill="none" stroke="#8c8cb4" stroke-width="1"/><path d="M2.300 9.200H10.800A4.300 4.300 0 1 0 10.100 11.600" fill="#e4f0fc" fill-opacity=".7" stroke="url(#eg)" stroke-width="2.400"/></svg>
<div class="a ft" style="left:83px;top:300px;letter-spacing:-0.026px">catdoc and xls2csv - f...</div>
<svg class="a" style="left:63px;top:320px" width="17" height="17" viewBox="0 0 17 17"><path d="M5.500 1.500h7.500l3 3v11.500h-10.500z" fill="#d8dcf8" stroke="#7878b8" stroke-width="1"/><path d="M13 1.500v3h3" fill="#b8c0ec" stroke="#7878b8" stroke-width="0.800"/><path d="M16.500 5v11h-10" fill="none" stroke="#8c8cb4" stroke-width="1"/><path d="M2.300 9.200H10.800A4.300 4.300 0 1 0 10.100 11.600" fill="#e4f0fc" fill-opacity=".7" stroke="url(#eg)" stroke-width="2.400"/></svg>
<div class="a ft" style="left:83px;top:322px;letter-spacing:-0.167px">DBF Viewer Plus - Edi...</div>
<svg class="a" style="left:63px;top:342px" width="17" height="17" viewBox="0 0 17 17"><path d="M5.500 1.500h7.500l3 3v11.500h-10.500z" fill="#d8dcf8" stroke="#7878b8" stroke-width="1"/><path d="M13 1.500v3h3" fill="#b8c0ec" stroke="#7878b8" stroke-width="0.800"/><path d="M16.500 5v11h-10" fill="none" stroke="#8c8cb4" stroke-width="1"/><path d="M2.300 9.200H10.800A4.300 4.300 0 1 0 10.100 11.600" fill="#e4f0fc" fill-opacity=".7" stroke="url(#eg)" stroke-width="2.400"/></svg>
<div class="a ft" style="left:83px;top:344px;letter-spacing:0.058px">eMailman(sm) -- Con...</div>
<svg class="a" style="left:63px;top:364px" width="17" height="17" viewBox="0 0 17 17"><path d="M5.500 1.500h7.500l3 3v11.500h-10.500z" fill="#d8dcf8" stroke="#7878b8" stroke-width="1"/><path d="M13 1.500v3h3" fill="#b8c0ec" stroke="#7878b8" stroke-width="0.800"/><path d="M16.500 5v11h-10" fill="none" stroke="#8c8cb4" stroke-width="1"/><path d="M2.300 9.200H10.800A4.300 4.300 0 1 0 10.100 11.600" fill="#e4f0fc" fill-opacity=".7" stroke="url(#eg)" stroke-width="2.400"/></svg>
<div class="a ft" style="left:83px;top:366px;letter-spacing:-0.197px">Google Search_</div>
<svg class="a" style="left:63px;top:386px" width="17" height="17" viewBox="0 0 17 17"><path d="M5.500 1.500h7.500l3 3v11.500h-10.500z" fill="#d8dcf8" stroke="#7878b8" stroke-width="1"/><path d="M13 1.500v3h3" fill="#b8c0ec" stroke="#7878b8" stroke-width="0.800"/><path d="M16.500 5v11h-10" fill="none" stroke="#8c8cb4" stroke-width="1"/><path d="M2.300 9.200H10.800A4.300 4.300 0 1 0 10.100 11.600" fill="#e4f0fc" fill-opacity=".7" stroke="url(#eg)" stroke-width="2.400"/></svg>
<div class="a ft" style="left:83px;top:388px;letter-spacing:-0.206px">HotPixels Eliminator</div>
<svg class="a" style="left:63px;top:408px" width="17" height="17" viewBox="0 0 17 17"><path d="M5.500 1.500h7.500l3 3v11.500h-10.500z" fill="#d8dcf8" stroke="#7878b8" stroke-width="1"/><path d="M13 1.500v3h3" fill="#b8c0ec" stroke="#7878b8" stroke-width="0.800"/><path d="M16.500 5v11h-10" fill="none" stroke="#8c8cb4" stroke-width="1"/><path d="M2.300 9.200H10.800A4.300 4.300 0 1 0 10.100 11.600" fill="#e4f0fc" fill-opacity=".7" stroke="url(#eg)" stroke-width="2.400"/></svg>
<div class="a ft" style="left:83px;top:410px;letter-spacing:-0.017px">How to diagnose and...</div>
<svg class="a" style="left:63px;top:430px" width="17" height="17" viewBox="0 0 17 17"><path d="M5.500 1.500h7.500l3 3v11.500h-10.500z" fill="#d8dcf8" stroke="#7878b8" stroke-width="1"/><path d="M13 1.500v3h3" fill="#b8c0ec" stroke="#7878b8" stroke-width="0.800"/><path d="M16.500 5v11h-10" fill="none" stroke="#8c8cb4" stroke-width="1"/><path d="M2.300 9.200H10.800A4.300 4.300 0 1 0 10.100 11.600" fill="#e4f0fc" fill-opacity=".7" stroke="url(#eg)" stroke-width="2.400"/></svg>
<div class="a ft" style="left:83px;top:432px;letter-spacing:-0.069px">Jans Freeware Datab...</div>
<svg class="a" style="left:63px;top:452px" width="17" height="17" viewBox="0 0 17 17"><path d="M5.500 1.500h7.500l3 3v11.500h-10.500z" fill="#d8dcf8" stroke="#7878b8" stroke-width="1"/><path d="M13 1.500v3h3" fill="#b8c0ec" stroke="#7878b8" stroke-width="0.800"/><path d="M16.500 5v11h-10" fill="none" stroke="#8c8cb4" stroke-width="1"/><path d="M2.300 9.200H10.800A4.300 4.300 0 1 0 10.100 11.600" fill="#e4f0fc" fill-opacity=".7" stroke="url(#eg)" stroke-width="2.400"/></svg>
<div class="a ft" style="left:83px;top:454px;letter-spacing:0.101px">Matsoftware.it - Prog...</div>
<svg class="a" style="left:63px;top:474px" width="17" height="17" viewBox="0 0 17 17"><path d="M5.500 1.500h7.500l3 3v11.500h-10.500z" fill="#d8dcf8" stroke="#7878b8" stroke-width="1"/><path d="M13 1.500v3h3" fill="#b8c0ec" stroke="#7878b8" stroke-width="0.800"/><path d="M16.500 5v11h-10" fill="none" stroke="#8c8cb4" stroke-width="1"/><path d="M2.300 9.200H10.800A4.300 4.300 0 1 0 10.100 11.600" fill="#e4f0fc" fill-opacity=".7" stroke="url(#eg)" stroke-width="2.400"/></svg>
<div class="a ft" style="left:83px;top:476px;letter-spacing:-0.189px">OL Oversized PST an...</div>
<svg class="a" style="left:63px;top:496px" width="17" height="17" viewBox="0 0 17 17"><path d="M5.500 1.500h7.500l3 3v11.500h-10.500z" fill="#d8dcf8" stroke="#7878b8" stroke-width="1"/><path d="M13 1.500v3h3" fill="#b8c0ec" stroke="#7878b8" stroke-width="0.800"/><path d="M16.500 5v11h-10" fill="none" stroke="#8c8cb4" stroke-width="1"/><path d="M2.300 9.200H10.800A4.300 4.300 0 1 0 10.100 11.600" fill="#e4f0fc" fill-opacity=".7" stroke="url(#eg)" stroke-width="2.400"/></svg>
<div class="a ft" style="left:83px;top:498px;letter-spacing:-0.052px">Organize, Access, An...</div>
<svg class="a" style="left:63px;top:518px" width="17" height="17" viewBox="0 0 17 17"><path d="M5.500 1.500h7.500l3 3v11.500h-10.500z" fill="#d8dcf8" stroke="#7878b8" stroke-width="1"/><path d="M13 1.500v3h3" fill="#b8c0ec" stroke="#7878b8" stroke-width="0.800"/><path d="M16.500 5v11h-10" fill="none" stroke="#8c8cb4" stroke-width="1"/><path d="M2.300 9.200H10.800A4.300 4.300 0 1 0 10.100 11.600" fill="#e4f0fc" fill-opacity=".7" stroke="url(#eg)" stroke-width="2.400"/></svg>
<div class="a ft" style="left:83px;top:520px;letter-spacing:-0.072px">pdftk - PDF repair</div>
<svg class="a" style="left:63px;top:540px" width="17" height="17" viewBox="0 0 17 17"><path d="M5.500 1.500h7.500l3 3v11.500h-10.500z" fill="#d8dcf8" stroke="#7878b8" stroke-width="1"/><path d="M13 1.500v3h3" fill="#b8c0ec" stroke="#7878b8" stroke-width="0.800"/><path d="M16.500 5v11h-10" fill="none" stroke="#8c8cb4" stroke-width="1"/><path d="M2.300 9.200H10.800A4.300 4.300 0 1 0 10.100 11.600" fill="#e4f0fc" fill-opacity=".7" stroke="url(#eg)" stroke-width="2.400"/></svg>
<div class="a ft" style="left:83px;top:542px;letter-spacing:-0.316px">PDFTK Will Repair PD...</div>
<svg class="a" style="left:63px;top:562px" width="17" height="17" viewBox="0 0 17 17"><path d="M5.500 1.500h7.500l3 3v11.500h-10.500z" fill="#d8dcf8" stroke="#7878b8" stroke-width="1"/><path d="M13 1.500v3h3" fill="#b8c0ec" stroke="#7878b8" stroke-width="0.800"/><path d="M16.500 5v11h-10" fill="none" stroke="#8c8cb4" stroke-width="1"/><path d="M2.300 9.200H10.800A4.300 4.300 0 1 0 10.100 11.600" fill="#e4f0fc" fill-opacity=".7" stroke="url(#eg)" stroke-width="2.400"/></svg>
<div class="a ft" style="left:83px;top:564px;letter-spacing:-0.111px">TextShield Homepage</div>
<svg class="a" style="left:63px;top:584px" width="17" height="17" viewBox="0 0 17 17"><path d="M5.500 1.500h7.500l3 3v11.500h-10.500z" fill="#d8dcf8" stroke="#7878b8" stroke-width="1"/><path d="M13 1.500v3h3" fill="#b8c0ec" stroke="#7878b8" stroke-width="0.800"/><path d="M16.500 5v11h-10" fill="none" stroke="#8c8cb4" stroke-width="1"/><path d="M2.300 9.200H10.800A4.300 4.300 0 1 0 10.100 11.600" fill="#e4f0fc" fill-opacity=".7" stroke="url(#eg)" stroke-width="2.400"/></svg>
<div class="a ft" style="left:83px;top:586px;letter-spacing:-0.130px">The Original MacGyv...</div>
<svg class="a" style="left:63px;top:606px" width="17" height="17" viewBox="0 0 17 17"><path d="M5.500 1.500h7.500l3 3v11.500h-10.500z" fill="#d8dcf8" stroke="#7878b8" stroke-width="1"/><path d="M13 1.500v3h3" fill="#b8c0ec" stroke="#7878b8" stroke-width="0.800"/><path d="M16.500 5v11h-10" fill="none" stroke="#8c8cb4" stroke-width="1"/><path d="M2.300 9.200H10.800A4.300 4.300 0 1 0 10.100 11.600" fill="#e4f0fc" fill-opacity=".7" stroke="url(#eg)" stroke-width="2.400"/></svg>
<div class="a ft" style="left:83px;top:608px;letter-spacing:0.169px">Time Adjuster for Div...</div>
<svg class="a" style="left:63px;top:628px" width="17" height="17" viewBox="0 0 17 17"><path d="M5.500 1.500h7.500l3 3v11.500h-10.500z" fill="#d8dcf8" stroke="#7878b8" stroke-width="1"/><path d="M13 1.500v3h3" fill="#b8c0ec" stroke="#7878b8" stroke-width="0.800"/><path d="M16.500 5v11h-10" fill="none" stroke="#8c8cb4" stroke-width="1"/><path d="M2.300 9.200H10.800A4.300 4.300 0 1 0 10.100 11.600" fill="#e4f0fc" fill-opacity=".7" stroke="url(#eg)" stroke-width="2.400"/></svg>
<div class="a ft" style="left:83px;top:630px;letter-spacing:0.141px">Twaddle Software</div>
<svg class="a" style="left:63px;top:650px" width="17" height="17" viewBox="0 0 17 17"><path d="M5.500 1.500h7.500l3 3v11.500h-10.500z" fill="#d8dcf8" stroke="#7878b8" stroke-width="1"/><path d="M13 1.500v3h3" fill="#b8c0ec" stroke="#7878b8" stroke-width="0.800"/><path d="M16.500 5v11h-10" fill="none" stroke="#8c8cb4" stroke-width="1"/><path d="M2.300 9.200H10.800A4.300 4.300 0 1 0 10.100 11.600" fill="#e4f0fc" fill-opacity=".7" stroke="url(#eg)" stroke-width="2.400"/></svg>
<div class="a ft" style="left:83px;top:652px;letter-spacing:-0.056px">Untitled Document</div>
<svg class="a" style="left:45px;top:673px" width="17" height="15" viewBox="0 0 17 15"><path d="M1 3.500c0-1 .6-1.700 1.600-1.700h3.800l1.600 1.700h6.500c.8 0 1.500.6 1.500 1.500v7.500c0 .8-.7 1.500-1.500 1.500h-12c-.8 0-1.500-.7-1.500-1.500z" fill="#f0cc58" stroke="#c49820" stroke-width="1.100"/><path d="M2 6.200c0-.8.500-1.300 1.300-1.300h10.800c.8 0 1.300.5 1.300 1.300v6.100c0 .6-.5 1.100-1.100 1.100H3.100c-.6 0-1.100-.5-1.100-1.100z" fill="url(#fg)"/></svg>
<div class="a ft" style="left:64px;top:674px;letter-spacing:-0.502px">DBF Repair</div>
<svg class="a" style="left:45px;top:695px" width="17" height="15" viewBox="0 0 17 15"><path d="M1 3.500c0-1 .6-1.700 1.600-1.700h3.800l1.600 1.700h6.500c.8 0 1.500.6 1.500 1.500v7.500c0 .8-.7 1.500-1.500 1.500h-12c-.8 0-1.500-.7-1.500-1.500z" fill="#f0cc58" stroke="#c49820" stroke-width="1.100"/><path d="M2 6.200c0-.8.500-1.300 1.300-1.300h10.800c.8 0 1.300.5 1.300 1.300v6.100c0 .6-.5 1.100-1.100 1.100H3.100c-.6 0-1.100-.5-1.100-1.100z" fill="url(#fg)"/></svg>
<div class="a ft" style="left:64px;top:696px;letter-spacing:-0.096px">Image Repair</div>
<svg class="a" style="left:45px;top:717px" width="17" height="15" viewBox="0 0 17 15"><path d="M1 3.500c0-1 .6-1.700 1.600-1.700h3.800l1.600 1.700h6.500c.8 0 1.500.6 1.500 1.500v7.500c0 .8-.7 1.500-1.500 1.500h-12c-.8 0-1.500-.7-1.500-1.500z" fill="#f0cc58" stroke="#c49820" stroke-width="1.100"/><path d="M2 6.200c0-.8.500-1.300 1.300-1.300h10.800c.8 0 1.300.5 1.300 1.300v6.100c0 .6-.5 1.100-1.100 1.100H3.100c-.6 0-1.100-.5-1.100-1.100z" fill="url(#fg)"/></svg>
<div class="a ft" style="left:64px;top:718px;letter-spacing:-0.355px">Misc</div>
<svg class="a" style="left:45px;top:739px" width="17" height="15" viewBox="0 0 17 15"><path d="M1 3.500c0-1 .6-1.700 1.600-1.700h3.800l1.600 1.700h6.500c.8 0 1.500.6 1.500 1.500v7.500c0 .8-.7 1.500-1.500 1.500h-12c-.8 0-1.500-.7-1.500-1.500z" fill="#f0cc58" stroke="#c49820" stroke-width="1.100"/><path d="M2 6.200c0-.8.500-1.300 1.300-1.300h10.800c.8 0 1.300.5 1.300 1.300v6.100c0 .6-.5 1.100-1.100 1.100H3.100c-.6 0-1.100-.5-1.100-1.100z" fill="url(#fg)"/></svg>
<div class="a ft" style="left:64px;top:740px;letter-spacing:-0.220px">Money Repair</div>
<svg class="a" style="left:45px;top:761px" width="17" height="15" viewBox="0 0 17 15"><path d="M1 3.500c0-1 .6-1.700 1.600-1.700h3.800l1.600 1.700h6.500c.8 0 1.500.6 1.500 1.500v7.500c0 .8-.7 1.500-1.500 1.500h-12c-.8 0-1.500-.7-1.500-1.500z" fill="#f0cc58" stroke="#c49820" stroke-width="1.100"/><path d="M2 6.200c0-.8.500-1.300 1.300-1.300h10.800c.8 0 1.300.5 1.300 1.300v6.100c0 .6-.5 1.100-1.100 1.100H3.100c-.6 0-1.100-.5-1.100-1.100z" fill="url(#fg)"/></svg>
<div class="a ft" style="left:64px;top:762px;letter-spacing:-0.191px">MS Office Repair</div>
<svg class="a" style="left:45px;top:783px" width="17" height="15" viewBox="0 0 17 15"><path d="M1 3.500c0-1 .6-1.700 1.600-1.700h3.800l1.600 1.700h6.500c.8 0 1.500.6 1.500 1.500v7.500c0 .8-.7 1.500-1.500 1.500h-12c-.8 0-1.500-.7-1.500-1.500z" fill="#f0cc58" stroke="#c49820" stroke-width="1.100"/><path d="M2 6.200c0-.8.500-1.300 1.300-1.300h10.800c.8 0 1.300.5 1.300 1.300v6.100c0 .6-.5 1.100-1.100 1.100H3.100c-.6 0-1.100-.5-1.100-1.100z" fill="url(#fg)"/></svg>
<div class="a ft" style="left:64px;top:784px;letter-spacing:-0.502px">PDF Repair</div>
<svg class="a" style="left:45px;top:805px" width="17" height="15" viewBox="0 0 17 15"><path d="M1 3.500c0-1 .6-1.700 1.600-1.700h3.800l1.600 1.700h6.500c.8 0 1.500.6 1.500 1.500v7.500c0 .8-.7 1.500-1.500 1.500h-12c-.8 0-1.500-.7-1.500-1.500z" fill="#f0cc58" stroke="#c49820" stroke-width="1.100"/><path d="M2 6.200c0-.8.500-1.300 1.300-1.300h10.800c.8 0 1.300.5 1.300 1.300v6.100c0 .6-.5 1.100-1.100 1.100H3.100c-.6 0-1.100-.5-1.100-1.100z" fill="url(#fg)"/></svg>
<div class="a ft" style="left:64px;top:806px;letter-spacing:-0.036px">Sites and Service - Free</div>
<svg class="a" style="left:63px;top:826px" width="17" height="17" viewBox="0 0 17 17"><path d="M5.500 1.500h7.500l3 3v11.500h-10.500z" fill="#d8dcf8" stroke="#7878b8" stroke-width="1"/><path d="M13 1.500v3h3" fill="#b8c0ec" stroke="#7878b8" stroke-width="0.800"/><path d="M16.500 5v11h-10" fill="none" stroke="#8c8cb4" stroke-width="1"/><path d="M2.300 9.200H10.800A4.300 4.300 0 1 0 10.100 11.600" fill="#e4f0fc" fill-opacity=".7" stroke="url(#eg)" stroke-width="2.400"/></svg>
<div class="a ft" style="left:83px;top:828px;letter-spacing:-0.199px">Recover An Unsaved ...</div>
<svg class="a" style="left:45px;top:849px" width="17" height="15" viewBox="0 0 17 15"><path d="M1 3.500c0-1 .6-1.700 1.600-1.700h3.800l1.600 1.700h6.500c.8 0 1.500.6 1.500 1.500v7.500c0 .8-.7 1.500-1.500 1.500h-12c-.8 0-1.500-.7-1.500-1.500z" fill="#f0cc58" stroke="#c49820" stroke-width="1.100"/><path d="M2 6.200c0-.8.500-1.300 1.300-1.300h10.800c.8 0 1.300.5 1.300 1.300v6.100c0 .6-.5 1.100-1.100 1.100H3.100c-.6 0-1.100-.5-1.100-1.100z" fill="url(#fg)"/></svg>
<div class="a ft" style="left:64px;top:850px;letter-spacing:-0.125px">Windows Repair</div>
<svg class="a" style="left:45px;top:871px" width="17" height="15" viewBox="0 0 17 15"><path d="M1 3.500c0-1 .6-1.700 1.600-1.700h3.800l1.600 1.700h6.500c.8 0 1.500.6 1.500 1.500v7.500c0 .8-.7 1.500-1.500 1.500h-12c-.8 0-1.500-.7-1.500-1.500z" fill="#f0cc58" stroke="#c49820" stroke-width="1.100"/><path d="M2 6.200c0-.8.500-1.300 1.300-1.300h10.800c.8 0 1.300.5 1.300 1.300v6.100c0 .6-.5 1.100-1.100 1.100H3.100c-.6 0-1.100-.5-1.100-1.100z" fill="url(#fg)"/></svg>
<div class="a ft" style="left:64px;top:872px;letter-spacing:-0.167px">Zip Repair</div>
<svg class="a" style="left:26px;top:893px" width="17" height="15" viewBox="0 0 17 15"><path d="M1 3.500c0-1 .6-1.700 1.600-1.700h3.800l1.600 1.700h6.500c.8 0 1.500.6 1.500 1.500v7.500c0 .8-.7 1.500-1.500 1.500h-12c-.8 0-1.500-.7-1.500-1.500z" fill="#f0cc58" stroke="#c49820" stroke-width="1.100"/><path d="M2 6.200c0-.8.500-1.300 1.300-1.300h10.800c.8 0 1.300.5 1.300 1.300v6.100c0 .6-.5 1.100-1.100 1.100H3.100c-.6 0-1.100-.5-1.100-1.100z" fill="url(#fg)"/></svg>
<div class="a ft" style="left:45px;top:894px;letter-spacing:-0.204px">Deleted File Recovery</div>
<div class="a" style="left:221px;top:229px;width:19px;height:682px;background:linear-gradient(to right,#f4f4f8,#ececf2 40%,#fbfbfd)"></div>
<div class="a sbtn" style="left:222px;top:230px"></div>
<svg class="a" style="left:226px;top:235px" width="10" height="7" viewBox="0 0 10 7"><path d="M1 5.500l4-4 4 4" fill="none" stroke="#2c2c3c" stroke-width="2"/></svg>
<div class="a sbtn" style="left:222px;top:892px"></div>
<svg class="a" style="left:226px;top:898px" width="10" height="7" viewBox="0 0 10 7"><path d="M1 1.500l4 4 4-4" fill="none" stroke="#2c2c3c" stroke-width="2"/></svg>
<div class="a" style="left:222px;top:433px;width:18px;height:344px;border:1px solid #9494a4;border-radius:2px;background:linear-gradient(to right,#f6f6fa 0,#e8e8f0 35%,#d0d0e0 60%,#c8c8dc 85%,#d8d8e6 100%);box-shadow:inset 0 0 0 1px rgba(255,255,255,.8)"></div>
<div class="a" style="left:227px;top:600px;width:8px;height:8px;background:linear-gradient(#8c8ca4 0,#8c8ca4 1px,#fff 1px,#fff 2px);background-size:8px 2px"></div>
<!--PAGE-->
<div class="a" style="left:256px;top:191px;width:993px;height:21px;background:#006699"></div>
<div class="a" style="left:256px;top:638px;width:993px;height:1px;background:#000;box-shadow:0 1px 0 rgba(0,0,0,.12)"></div>
<div class="a" style="left:256px;top:667px;width:24px;height:13px;background:#c8cac8"></div>
<div class="a pl" style="left:261px;top:193px;letter-spacing:-0.281px;font-size:13px;font-weight:bold;color:#ffffcc">Home</div>
<div class="a pl" style="left:311px;top:193px;letter-spacing:-0.230px;font-size:13px;font-weight:bold;color:#ffffcc">VBA Section</div>
<div class="a pl" style="left:399px;top:193px;letter-spacing:0.001px;font-size:13px;font-weight:bold;color:#ffffcc">General Section</div>
<div class="a pl" style="left:512px;top:193px;letter-spacing:-0.149px;font-size:13px;font-weight:bold;color:#ffffcc">Downloads</div>
<div class="a pl" style="left:593px;top:193px;letter-spacing:0.035px;font-size:13px;font-weight:bold;color:#ffffcc">Licensing</div>
<div class="a pl" style="left:667px;top:193px;letter-spacing:0.131px;font-size:13px;font-weight:bold;color:#ffffcc">Privacy Policy</div>
<div class="a pl" style="left:301px;top:193px;letter-spacing:1.359px;font-size:13px;font-weight:bold;color:#ffffcc">|</div>
<div class="a pl" style="left:390px;top:193px;letter-spacing:1.359px;font-size:13px;font-weight:bold;color:#ffffcc">|</div>
<div class="a pl" style="left:504px;top:193px;letter-spacing:1.359px;font-size:13px;font-weight:bold;color:#ffffcc">|</div>
<div class="a pl" style="left:585px;top:193px;letter-spacing:1.359px;font-size:13px;font-weight:bold;color:#ffffcc">|</div>
<div class="a pl" style="left:658px;top:193px;letter-spacing:1.359px;font-size:13px;font-weight:bold;color:#ffffcc">|</div>
<div class="a pl" style="left:258px;top:217px;letter-spacing:0.157px;font-size:17px;font-weight:bold;font-style:italic;color:#000080">Recover An Unsaved Document When Word Crashes</div>
<div class="a pl" style="left:258px;top:260px;letter-spacing:0.592px;">A friend once sent me a mail which had the following signature: "Millions of years ago a meteor crashed into earth and destroyed all dinosaur life. So keep saving your</div>
<div class="a pl" style="left:258px;top:278px;letter-spacing:0.769px;">work. You never know when it might hit next!"</div>
<div class="a pl" style="left:258px;top:314px;letter-spacing:0.584px;">It might seem a silly humorous statement but ask anyone who has lost work because of the computer hanging up on him/her. '<b>Save your work every once in a while</b>' is</div>
<div class="a pl" style="left:258px;top:332px;letter-spacing:0.604px;">an oft repeated phrase. However if you are one of those brave souls who believe in saving only at the end of the job then you are in deep trouble when Word</div>
<div class="a pl" style="left:258px;top:350px;letter-spacing:0.694px;">crashes/hangs. Yet, you may be able to recover it or at least some part of it.</div>
<div class="a pl" style="left:258px;top:387px;letter-spacing:0.589px;">To do this: Open the <b>Tools</b> menu. Click <b>Options</b>. Click the <b>File Locations</b> tab. If the space next to <b>AutoRecover</b> files is blank, then your data is lost. If there is a</div>
<div class="a pl" style="left:258px;top:405px;letter-spacing:0.663px;">location, go to that location and open the document.</div>
<div class="a pl" style="left:258px;top:442px;letter-spacing:0.456px;"><b>How to turn on AutoRecovery</b>:</div>
<div class="a pl" style="left:258px;top:460px;letter-spacing:0.485px;">Select <b>Tools</b>, <b>Options</b>, Check '<b>Save AutoRecover info every</b>:' and provide the interval.</div>
<div class="a pl" style="left:258px;top:478px;letter-spacing:0.577px;">Then click on the <b>File Locations</b> tab, Select <b>AutoRecover Files</b>, Click on "<b>Modify</b>..." &amp; provide a location for its to save the files.</div>
<div class="a pl" style="left:258px;top:509px;letter-spacing:0.528px;"><b>How does it work</b>:</div>
<div class="a pl" style="left:258px;top:527px;letter-spacing:0.633px;">When AutoRecover is turned on, the changes you make are saved at set intervals in a separate, temporary recovery file. Then, if you have to restart Word or your</div>
<div class="a pl" style="left:258px;top:545px;letter-spacing:0.631px;">computer without saving your work, Word automatically opens the recovery file. In some cases it doesn't. In such situations you have to try out the above solution. The</div>
<div class="a pl" style="left:258px;top:563px;letter-spacing:0.590px;">recovery file contains your changes up until the last time AutoRecover saved the document. For example, if you set AutoRecover to save every 7 minutes, you don't lose</div>
<div class="a pl" style="left:258px;top:581px;letter-spacing:0.647px;">more than 7 minutes of work. All documents that were open at the time of the power failure or similar problem appear for you. Only changes you made after the last</div>
<div class="a pl" style="left:258px;top:598px;letter-spacing:0.535px;">AutoRecover save are lost.</div>
<div class="a pl" style="left:261px;top:648px;letter-spacing:-0.095px;font-weight:bold;font-size:13.5px">Copyright &copy; 1999-2005 Shyam Pillai. All rights reserved.</div>
<!--STATUS-->
<div class="a" style="left:1259px;top:176px;width:17px;height:733px;background:#fdfdfe"></div>
<div class="a" style="left:1276px;top:174px;width:4px;height:737px;background:linear-gradient(to right,#ececf0 0,#f4f4f6 2px,#fcfcfc 2px)"></div>
<div class="a" style="left:1260px;top:177px;width:16px;height:17px;background:#eeeeea;border:1px solid #f6f6f2;border-bottom-color:#d4d4d0"></div>
<svg class="a" style="left:1263px;top:182px" width="10" height="7" viewBox="0 0 10 7"><path d="M1 5.500l4-4 4 4" fill="none" stroke="#c4c4c0" stroke-width="1.800"/></svg>
<div class="a" style="left:1260px;top:890px;width:16px;height:17px;background:#eeeeea;border:1px solid #f6f6f2;border-bottom-color:#d4d4d0"></div>
<svg class="a" style="left:1263px;top:895px" width="10" height="7" viewBox="0 0 10 7"><path d="M1 1.500l4 4 4-4" fill="none" stroke="#c4c4c0" stroke-width="1.800"/></svg>
<svg class="a" style="left:1px;top:913px" width="17" height="17" viewBox="0 0 17 17"><path d="M5.500 1.500h7.500l3 3v11.500h-10.500z" fill="#d8dcf8" stroke="#7878b8" stroke-width="1"/><path d="M13 1.500v3h3" fill="#b8c0ec" stroke="#7878b8" stroke-width="0.800"/><path d="M16.500 5v11h-10" fill="none" stroke="#8c8cb4" stroke-width="1"/><path d="M2.300 9.200H10.800A4.300 4.300 0 1 0 10.100 11.600" fill="#e4f0fc" fill-opacity=".7" stroke="url(#eg)" stroke-width="2.400"/></svg>
<div class="a" style="left:982px;top:914px;width:2px;height:19px;border-left:1px solid #c4c4cc;border-right:1px solid #f8f8fc"></div>
<div class="a" style="left:1006px;top:914px;width:2px;height:19px;border-left:1px solid #c4c4cc;border-right:1px solid #f8f8fc"></div>
<div class="a" style="left:1030px;top:914px;width:2px;height:19px;border-left:1px solid #c4c4cc;border-right:1px solid #f8f8fc"></div>
<div class="a" style="left:1054px;top:914px;width:2px;height:19px;border-left:1px solid #c4c4cc;border-right:1px solid #f8f8fc"></div>
<div class="a" style="left:1078px;top:914px;width:2px;height:19px;border-left:1px solid #c4c4cc;border-right:1px solid #f8f8fc"></div>
<div class="a" style="left:1102px;top:914px;width:2px;height:19px;border-left:1px solid #c4c4cc;border-right:1px solid #f8f8fc"></div>
<div class="a" style="left:1108px;top:917px;width:13px;height:13px;border-radius:7px;background:radial-gradient(circle at 45% 40%,#3c6cf0,#1c2cb0 65%,#101868);border:1px solid #1c1c5c"></div>
<svg class="a" style="left:1108px;top:917px" width="13" height="13" viewBox="0 0 13 13"><path d="M2 5c1-2 3-3 4-2.500s1 2 0 3-2 2-1.500 3.500S3 10 2 8z" fill="#2cb43c"/><path d="M8.500 6.500c1-.5 2.500 0 2.500 1.500s-1.500 3-2.500 2.500-.5-3 0-4z" fill="#2cb43c"/></svg>
<div class="a" style="left:1127px;top:916px;line-height:16px;letter-spacing:0.126px">Internet</div>
<div class="a" style="left:0;top:934px;width:101px;height:4px;background:linear-gradient(#2c8c24 0,#2c8c24 1px,#8cd870 1px,#a4e488 4px)"></div>
<div class="a" style="left:101px;top:934px;width:1179px;height:4px;background:linear-gradient(#8c8ca8 0,#8c8ca8 1px,#f4f4fa 1px)"></div>
<div class="a" style="left:292px;top:935px;width:158px;height:3px;background:#a4a4b8;border-top:1px solid #6c6c84"></div>
<div class="a" style="left:612px;top:935px;width:158px;height:3px;background:#a4a4b8;border-top:1px solid #6c6c84"></div>
<div class="a" style="left:1147px;top:934px;width:133px;height:4px;background:#fafafc;border-left:1px solid #6c6c84"></div>
<div class="a" style="left:1160px;top:935px;width:11px;height:3px;background:#c49c3c"></div>
<div class="a" style="left:1177px;top:935px;width:8px;height:3px;background:#6c6c6c"></div>
</body>
</html>
